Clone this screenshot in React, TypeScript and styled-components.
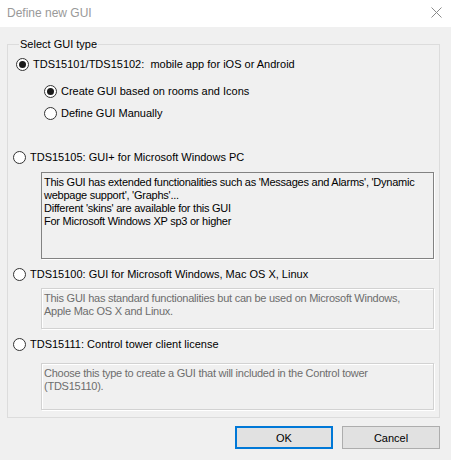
import styled, { createGlobalStyle } from 'styled-components';

const GlobalStyle = createGlobalStyle`
  html, body {
    margin: 0;
    padding: 0;
    background: #f0f0f0;
  }
  * {
    box-sizing: border-box;
  }
`;

type Option = {
  id: string;
  label: string;
  description?: string;
  enabled?: boolean;
  boxHeight?: number;
};

// descriptions keep the line breaks the dialog shows
const licenses: Option[] = [
  {
    id: 'tds15105',
    label: 'TDS15105: GUI+ for Microsoft Windows PC',
    description:
      "This GUI has extended functionalities such as 'Messages and Alarms', 'Dynamic\nwebpage support', 'Graphs'...\nDifferent 'skins' are available for this GUI\nFor Microsoft Windows XP sp3 or higher",
    enabled: true,
    boxHeight: 87,
  },
  {
    id: 'tds15100',
    label: 'TDS15100: GUI for Microsoft Windows, Mac OS X, Linux',
    description:
      'This GUI has standard functionalities but can be used on Microsoft Windows,\nApple Mac OS X and Linux.',
    boxHeight: 41,
  },
  {
    id: 'tds15111',
    label: 'TDS15111: Control tower client license',
    description: 'Choose this type to create a GUI that will included in the Control tower\n(TDS15110).',
    boxHeight: 47,
  },
];

const Radio = ({ checked }: { checked?: boolean }) => (
  <RadioCircle>{checked && <RadioDot />}</RadioCircle>
);

const CloseIcon = () => (
  <svg width="11" height="11" viewBox="0 0 11 11">
    <path d="M0.5 0.5 L10.5 10.5 M10.5 0.5 L0.5 10.5" stroke="#8a8a8a" strokeWidth="1" fill="none" />
  </svg>
);

const App = () => (
  <>
    <GlobalStyle />
    <Window>
      <TitleBar>
        <Title>Define new GUI</Title>
        <CloseButton>
          <CloseIcon />
        </CloseButton>
      </TitleBar>
      <Body>
        <Group>
          <Legend>Select GUI type</Legend>
          <RadioRow $top={5} $indent={3}>
            <Radio checked />
            <Label>TDS15101/TDS15102:&nbsp; mobile app for iOS or Android</Label>
          </RadioRow>
          <RadioRow $top={11} $indent={31}>
            <Radio checked />
            <Label>Create GUI based on rooms and Icons</Label>
          </RadioRow>
          <RadioRow $top={6} $indent={31}>
            <Radio />
            <Label>Define GUI Manually</Label>
          </RadioRow>
          {licenses.map((opt, i) => (
            <div key={opt.id}>
              <RadioRow $top={i === 0 ? 28 : 7}>
                <Radio />
                <Label>{opt.label}</Label>
              </RadioRow>
              <InfoBox
                $enabled={opt.enabled}
                $top={i === 2 ? 11 : i === 1 ? 6 : 7}
                style={{ height: opt.boxHeight }}
              >
                {opt.description}
              </InfoBox>
            </div>
          ))}
        </Group>
        <Buttons>
          <Button $default>OK</Button>
          <Button>Cancel</Button>
        </Buttons>
      </Body>
    </Window>
  </>
);

export default App;

const Window = styled.div`
  width: 451px;
  height: 460px;
  background: #f0f0f0;
  font-family: 'Liberation Sans', Arial, sans-serif;
  font-size: 11px;
  color: #000;
  display: flex;
  flex-direction: column;
`;

const TitleBar = styled.div`
  height: 27px;
  background: #fff;
  display: flex;
  align-items: center;
  justify-content: space-between;
  padding: 0 9px 2px 7px;
`;

const Title = styled.div`
  font-size: 12px;
  color: #999;
`;

const CloseButton = styled.div`
  display: flex;
  align-items: center;
`;

const Body = styled.div`
  flex: 1;
  padding: 11px 11px 0 7px;
`;

const Group = styled.fieldset`
  margin: 0;
  padding: 0 5px 7px 5px;
  border: 1px solid #dcdcdc;
  height: 380px;
`;

const Legend = styled.legend`
  padding: 0 1px;
  margin-left: 6px;
  line-height: 13px;
`;

const RadioRow = styled.div<{ $top: number; $indent?: number }>`
  display: flex;
  align-items: center;
  height: 16px;
  margin-top: ${(p) => p.$top}px;
  padding-left: ${(p) => p.$indent ?? 0}px;
`;

const RadioCircle = styled.span`
  width: 13px;
  height: 13px;
  border: 1px solid #333;
  border-radius: 50%;
  background: #fff;
  display: flex;
  align-items: center;
  justify-content: center;
  flex-shrink: 0;
`;

const RadioDot = styled.span`
  width: 7px;
  height: 7px;
  border-radius: 50%;
  background: #1a1a1a;
`;

const Label = styled.span`
  margin-left: 4px;
  white-space: nowrap;
`;

const InfoBox = styled.div<{ $enabled?: boolean; $top: number }>`
  margin: ${(p) => p.$top}px 0 0 28px;
  padding: 3px 2px 0 2px;
  line-height: 13px;
  letter-spacing: -0.25px;
  white-space: pre;
  overflow: hidden;
  color: ${(p) => (p.$enabled ? '#000' : '#6d6d6d')};
  border: 1px solid ${(p) => (p.$enabled ? '#828282' : '#d2d2d2')};
  box-shadow: ${(p) => (p.$enabled ? '1px 1px 0 #fff' : 'inset 1px 1px 0 #fff, 1px 1px 0 #fff')};
`;

const Buttons = styled.div`
  display: flex;
  justify-content: flex-end;
  gap: 9px;
  margin-top: 8px;
`;

const Button = styled.button<{ $default?: boolean }>`
  width: 98px;
  height: 23px;
  font-family: inherit;
  font-size: 11px;
  color: #000;
  background: #e1e1e1;
  border: ${(p) => (p.$default ? '2px solid #0078d7' : '1px solid #adadad')};
  border-radius: 0;
  padding: 0;
`;
